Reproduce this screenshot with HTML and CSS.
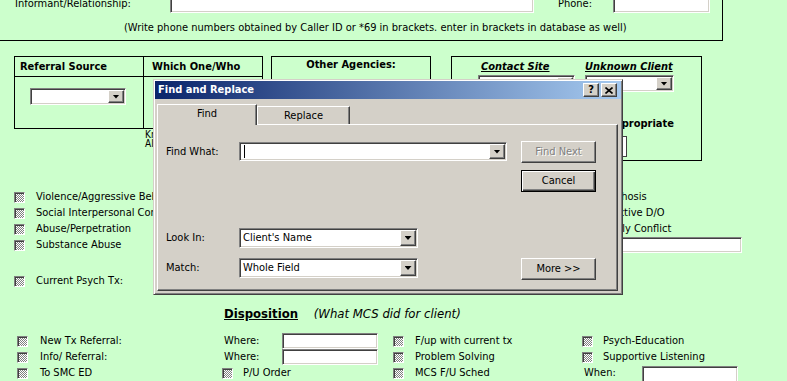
FILE: index.html
```html
<!DOCTYPE html>
<html lang="en">
<head>
    <meta charset="UTF-8">
    <title>Crisis Contact Form</title>
    <link rel="stylesheet" href="styles.css">
</head>
<body>
    <!-- Caller info -->
    <div class="caller">
        <div class="caller-row">
            <span class="informant-lbl">Informant/Relationship:</span>
            <span class="field informant-field"></span>
            <span class="phone-lbl">Phone:</span>
            <span class="field phone-field"></span>
        </div>
        <div class="note">(Write phone numbers obtained by Caller ID or *69 in brackets. enter in brackets in database as well)</div>
    </div>

    <!-- Referral / agencies / contact -->
    <div class="boxes">
        <div class="referral">
            <div class="ref-table">
                <div class="ref-head">
                    <div class="ref-left">Referral Source</div>
                    <div class="ref-right">Which One/Who</div>
                </div>
                <div class="ref-body">
                    <div class="ref-left"><span class="combo ref-combo"><span class="drop"></span></span></div>
                    <div class="ref-right"></div>
                </div>
            </div>
            <div class="known">Known to MCS<br>Already in Tx</div>
        </div>

        <div class="agencies">Other Agencies:</div>

        <div class="contact">
            <div class="contact-head">
                <div class="site-col">
                    <div class="ttl site-ttl">Contact Site</div>
                    <span class="combo site-combo"><span class="drop"></span></span>
                </div>
                <div class="unknown-col">
                    <div class="ttl">Unknown Client</div>
                    <span class="combo unknown-combo"><span class="drop"></span></span>
                </div>
            </div>
            <div class="approp">Appropriate</div>
            <span class="field approp-field"></span>
        </div>
    </div>

    <!-- Presenting issues -->
    <div class="issues">
        <div class="issue-row">
            <div class="issue-left"><span class="cb"></span><span class="issue-lbl">Violence/Aggressive Behavior</span></div>
            <div class="issue-right"><span class="cb"></span><span class="issue-lbl">Psychosis</span></div>
        </div>
        <div class="issue-row">
            <div class="issue-left"><span class="cb"></span><span class="issue-lbl">Social Interpersonal Conflict</span></div>
            <div class="issue-right"><span class="cb"></span><span class="issue-lbl">Affective D/O</span></div>
        </div>
        <div class="issue-row">
            <div class="issue-left"><span class="cb"></span><span class="issue-lbl">Abuse/Perpetration</span></div>
            <div class="issue-right"><span class="cb"></span><span class="issue-lbl">Family Conflict</span></div>
        </div>
        <div class="issue-row">
            <div class="issue-left"><span class="cb"></span><span class="issue-lbl">Substance Abuse</span></div>
            <div class="issue-right"><span class="field other-field"></span></div>
        </div>
        <div class="issue-row psych-row">
            <div class="issue-left"><span class="cb"></span><span class="issue-lbl psych-lbl">Current Psych Tx:</span><span class="field psych-field"></span></div>
        </div>
    </div>

    <!-- Disposition -->
    <div class="disp-head">
        <span class="disp-ttl">Disposition</span>
        <span class="disp-sub">(What MCS did for client)</span>
    </div>
    <div class="disp-grid">
        <div class="dcell c1"><span class="cb"></span><span class="dlbl">New Tx Referral:</span></div>
        <div class="dcell c2"><span class="where">Where:</span><span class="field where-field"></span></div>
        <div class="dcell c3"><span class="cb"></span><span class="dlbl">F/up with current tx</span></div>
        <div class="dcell c4"><span class="cb"></span><span class="dlbl">Psych-Education</span></div>

        <div class="dcell c1"><span class="cb"></span><span class="dlbl">Info/ Referral:</span></div>
        <div class="dcell c2"><span class="where">Where:</span><span class="field where-field"></span></div>
        <div class="dcell c3"><span class="cb"></span><span class="dlbl">Problem Solving</span></div>
        <div class="dcell c4"><span class="cb"></span><span class="dlbl">Supportive Listening</span></div>

        <div class="dcell c1"><span class="cb"></span><span class="dlbl">To SMC ED</span></div>
        <div class="dcell c2 pu"><span class="cb"></span><span class="dlbl pu-lbl">P/U Order</span></div>
        <div class="dcell c3"><span class="cb"></span><span class="dlbl">MCS F/U Sched</span></div>
        <div class="dcell c4 when-cell"><span class="when">When:</span><span class="field when-field"></span></div>
    </div>

    <!-- Find and Replace dialog -->
    <div class="dialog">
        <div class="titlebar">
            <span class="title">Find and Replace</span>
            <span class="tbtn help">?</span>
            <span class="tbtn">
                <svg width="8" height="7" viewBox="0 0 8 7"><path d="M0.5 0.5 L7.5 6.5 M7.5 0.5 L0.5 6.5" stroke="#000" stroke-width="1.6"/></svg>
            </span>
        </div>
        <div class="tabs">
            <span class="tab active">Find</span>
            <span class="tab replace">Replace</span>
        </div>
        <div class="panel">
            <div class="panel-left">
                <div class="prow find-row">
                    <span class="plbl">Find What:</span>
                    <span class="combo find-combo"><span class="caret"></span><span class="drop"></span></span>
                </div>
                <div class="prow look-row">
                    <span class="plbl">Look In:</span>
                    <span class="combo pick-combo"><span class="ctext">Client's Name</span><span class="drop"></span></span>
                </div>
                <div class="prow match-row">
                    <span class="plbl">Match:</span>
                    <span class="combo pick-combo"><span class="ctext">Whole Field</span><span class="drop"></span></span>
                </div>
            </div>
            <div class="panel-right">
                <span class="btn disabled">Find Next</span>
                <span class="btn default">Cancel</span>
                <span class="btn more">More &gt;&gt;</span>
            </div>
        </div>
    </div>
</body>
</html>
```

FILE: styles.css
```css
html, body {
    margin: 0;
    padding: 0;
}

body {
    width: 787px;
    height: 381px;
    overflow: hidden;
    position: relative;
    background: #ccffcc;
    color: #000;
    font-family: "DejaVu Sans Condensed", "DejaVu Sans", "Liberation Sans", sans-serif;
    font-stretch: condensed;
    font-size: 11px;
    line-height: 14px;
}

/* sunken access-style fields */
.field,
.combo {
    box-sizing: border-box;
    display: flex;
    align-items: center;
    background: #fff;
    border: 1px solid;
    border-color: #808080 #fff #fff #808080;
    box-shadow: inset 1px 1px 0 #404040, inset -1px -1px 0 #d4d0c8;
}

.combo {
    padding: 1px;
}

/* raised win classic parts */
.drop,
.tbtn,
.btn {
    box-sizing: border-box;
    background: #d4d0c8;
    border: 1px solid;
    border-color: #fff #404040 #404040 #fff;
    box-shadow: inset -1px -1px 0 #808080;
}

.drop {
    margin-left: auto;
    width: 16px;
    align-self: stretch;
    display: flex;
    align-items: center;
    justify-content: center;
}

.drop::after {
    content: "";
    width: 7px;
    height: 4px;
    background: #000;
    clip-path: polygon(0 0, 100% 0, 50% 100%);
}

.cb {
    box-sizing: border-box;
    flex: none;
    width: 11px;
    height: 11px;
    border: 1px solid;
    border-color: #808080 #fff #fff #808080;
    box-shadow: inset 1px 1px 0 #404040;
    background: repeating-conic-gradient(#808080 0 25%, #fff 0 50%) 0 0 / 2px 2px;
}

/* caller box */
.caller {
    display: flow-root;
    box-sizing: border-box;
    width: 723px;
    height: 41px;
    border-right: 1px solid #000;
    border-bottom: 1px solid #000;
}

.caller-row {
    display: flex;
    align-items: center;
    height: 19px;
    margin-top: -6px;
}

.informant-lbl {
    width: 155px;
    padding-left: 15px;
}

.informant-field {
    width: 364px;
    height: 19px;
}

.phone-lbl {
    margin-left: 24px;
    width: 55px;
}

.phone-field {
    width: 97px;
    height: 19px;
}

.note {
    margin-top: 8px;
    padding-left: 124px;
    white-space: nowrap;
}

/* boxes row */
.boxes {
    display: flex;
    align-items: flex-start;
    margin-top: 15px;
}

.referral {
    margin-left: 14px;
    width: 249px;
}

.ref-table {
    border: 1px solid #000;
}

.ref-head,
.ref-body {
    display: flex;
}

.ref-head {
    height: 19px;
    border-bottom: 1px solid #000;
    font-weight: bold;
    line-height: 19px;
}

.ref-body {
    height: 51px;
}

.ref-left {
    box-sizing: border-box;
    width: 129px;
    border-right: 1px solid #000;
}

.ref-head .ref-left {
    padding-left: 5px;
}

.ref-head .ref-right {
    padding-left: 8px;
}

.ref-body .ref-left {
    padding: 11px 0 0 15px;
}

.ref-combo {
    width: 96px;
    height: 17px;
}

.known {
    margin-top: 1px;
    padding-left: 131px;
    font-size: 10px;
    line-height: 9px;
    white-space: nowrap;
}

.agencies {
    box-sizing: border-box;
    margin-left: 8px;
    width: 160px;
    height: 73px;
    border: 1px solid #000;
    padding-top: 1px;
    text-align: center;
    font-weight: bold;
}

.contact {
    box-sizing: border-box;
    margin-left: 20px;
    width: 251px;
    height: 105px;
    border: 1px solid #000;
    padding-top: 3px;
}

.contact-head {
    display: flex;
    padding-left: 26px;
}

.site-col {
    width: 107px;
}

.unknown-col {
    width: 89px;
}

.ttl {
    font-weight: bold;
    font-style: italic;
    text-decoration: underline;
    white-space: nowrap;
}

.site-ttl {
    padding-left: 3px;
}

.site-combo {
    margin-top: 1px;
    width: 97px;
    height: 17px;
}

.unknown-combo {
    margin-top: 1px;
    width: 89px;
    height: 17px;
}

.approp {
    margin-top: 25px;
    padding-left: 155px;
    font-weight: bold;
}

.approp-field {
    margin: 5px 0 0 155px;
    width: 20px;
    height: 21px;
    border: 1px solid #404040;
    box-shadow: none;
}

/* presenting issues */
.issues {
    margin-top: 28px;
}

.issue-row {
    display: flex;
    align-items: center;
    height: 16px;
}

.issue-left {
    display: flex;
    align-items: center;
    width: 577px;
    padding-left: 14px;
    box-sizing: border-box;
    white-space: nowrap;
}

.issue-right {
    display: flex;
    align-items: center;
    white-space: nowrap;
}

.issue-lbl {
    margin-left: 11px;
}

.issue-right .issue-lbl {
    margin-left: 11px;
}

.other-field {
    margin-left: 18px;
    width: 147px;
    height: 16px;
}

.psych-row {
    margin-top: 20px;
}

.psych-lbl {
    width: 164px;
}

.psych-field {
    width: 426px;
    height: 15px;
}

/* disposition */
.disp-head {
    margin-top: 17px;
    padding-left: 224px;
    font-size: 13px;
    line-height: 16px;
}

.disp-ttl {
    font-weight: bold;
    text-decoration: underline;
}

.disp-sub {
    margin-left: 12px;
    font-style: italic;
}

.disp-grid {
    display: grid;
    grid-template-columns: 222px 171px 189px 205px;
    grid-auto-rows: 16px;
    margin-top: 11px;
}

.dcell {
    display: flex;
    align-items: center;
    white-space: nowrap;
}

.c1 {
    padding-left: 17px;
}

.dlbl {
    margin-left: 12px;
}

.c3 .dlbl {
    margin-left: 11px;
}

.c4 .dlbl,
.pu-lbl {
    margin-left: 10px;
}

.where {
    width: 58px;
    padding-left: 2px;
}

.where-field {
    width: 96px;
    height: 16px;
}

.when {
    width: 58px;
    padding-left: 2px;
}

.when-field {
    width: 96px;
    height: 17px;
    margin-top: 2px;
}

/* find and replace dialog */
.dialog {
    position: absolute;
    left: 153px;
    top: 79px;
    width: 470px;
    height: 216px;
    box-sizing: border-box;
    padding: 1px;
    background: #d4d0c8;
    border: 1px solid;
    border-color: #d4d0c8 #404040 #404040 #d4d0c8;
    box-shadow: inset 1px 1px 0 #fff, inset -1px -1px 0 #808080;
}

.titlebar {
    display: flex;
    align-items: center;
    gap: 2px;
    height: 18px;
    padding: 0 4px 0 3px;
    background: linear-gradient(to right, #0a246a, #a6caf0);
}

.title {
    flex: 1;
    color: #fff;
    font-weight: bold;
}

.tbtn {
    width: 16px;
    height: 14px;
    display: flex;
    align-items: center;
    justify-content: center;
    font-weight: bold;
    font-size: 11px;
    line-height: 12px;
}

.tabs {
    display: flex;
    align-items: flex-start;
    margin-top: 5px;
    padding-left: 2px;
    height: 20px;
}

.tab {
    box-sizing: border-box;
    background: #d4d0c8;
    border: 1px solid;
    border-bottom: none;
    border-color: #fff #404040 #d4d0c8 #fff;
    box-shadow: inset -1px 0 0 #808080;
    text-align: center;
}

.tab.active {
    position: relative;
    z-index: 1;
    width: 100px;
    height: 21px;
    line-height: 18px;
}

.tab.replace {
    margin-top: 2px;
    width: 93px;
    height: 18px;
    line-height: 17px;
}

.panel {
    box-sizing: border-box;
    display: flex;
    margin-left: 2px;
    width: 461px;
    height: 167px;
    border: 1px solid;
    border-color: #fff #404040 #404040 #fff;
    box-shadow: inset -1px -1px 0 #808080;
}

.panel-left {
    box-sizing: border-box;
    width: 363px;
    padding-left: 8px;
}

.prow {
    display: flex;
    align-items: center;
}

.plbl {
    width: 73px;
}

.find-row {
    margin-top: 17px;
}

.find-combo {
    width: 268px;
    height: 19px;
}

.caret {
    width: 1px;
    height: 13px;
    margin-left: 3px;
    background: #000;
}

.look-row {
    margin-top: 67px;
}

.match-row {
    margin-top: 10px;
}

.pick-combo {
    width: 179px;
    height: 20px;
}

.ctext {
    padding-left: 2px;
}

.panel-right {
    display: flex;
    flex-direction: column;
    width: 75px;
    padding-top: 16px;
}

.btn {
    display: flex;
    align-items: center;
    justify-content: center;
    height: 22px;
}

.btn.disabled {
    color: #808080;
    text-shadow: 1px 1px 0 #fff;
}

.btn.default {
    margin-top: 7px;
    border: 1px solid #000;
    box-shadow: inset 1px 1px 0 #fff, inset -1px -1px 0 #404040, inset -2px -2px 0 #808080;
}

.btn.more {
    margin-top: 66px;
}
```
